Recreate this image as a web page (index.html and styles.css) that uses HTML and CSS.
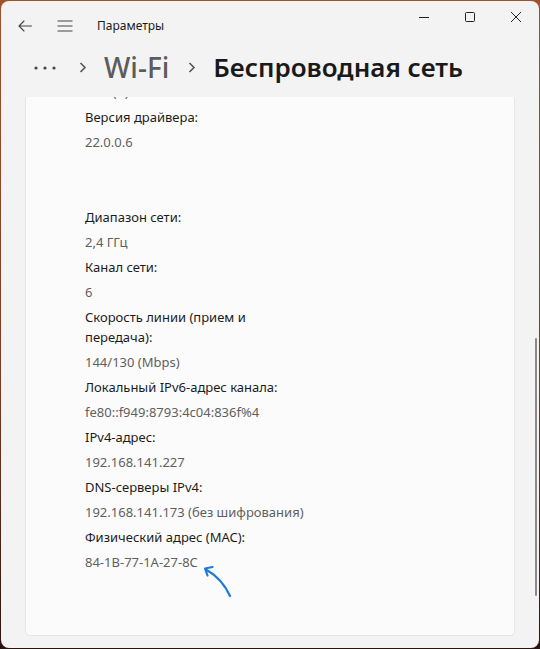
FILE: index.html
```html
<!DOCTYPE html>
<html lang="ru">
<head>
<meta charset="utf-8">
<title>Параметры</title>
<link rel="stylesheet" href="styles.css">
</head>
<body>
<div class="window">
  <div class="titlebar">
    <div class="tb-left">
      <svg class="tb-back" width="14" height="12" viewBox="0 0 14 12"><path d="M6 1 L1 6 L6 11 M1 6 H13.5" fill="none" stroke="#444" stroke-width="1.1" stroke-linecap="round" stroke-linejoin="round"/></svg>
      <svg class="tb-menu" width="16" height="12" viewBox="0 0 16 12"><path d="M0.5 1 H15.5 M0.5 6 H15.5 M0.5 11 H15.5" fill="none" stroke="#444" stroke-width="1.1"/></svg>
      <span class="tb-title">Параметры</span>
    </div>
    <div class="tb-caption">
      <div class="cap-btn"><svg width="12" height="12" viewBox="0 0 12 12"><path d="M1 6.5 H11" stroke="#222" stroke-width="1"/></svg></div>
      <div class="cap-btn"><svg width="12" height="12" viewBox="0 0 12 12"><rect x="1.5" y="1.5" width="9" height="9" rx="1" fill="none" stroke="#222" stroke-width="1"/></svg></div>
      <div class="cap-btn"><svg width="12" height="12" viewBox="0 0 12 12"><path d="M1 1 L11 11 M11 1 L1 11" stroke="#222" stroke-width="1"/></svg></div>
    </div>
  </div>
  <div class="crumbs">
    <svg class="dots" width="22" height="4" viewBox="0 0 22 4"><circle cx="2" cy="2" r="1.6" fill="#444"/><circle cx="11" cy="2" r="1.6" fill="#444"/><circle cx="20" cy="2" r="1.6" fill="#444"/></svg>
    <svg class="chev" width="8" height="11" viewBox="0 0 8 11"><path d="M1.5 1 L6 5.5 L1.5 10" fill="none" stroke="#555" stroke-width="1.6"/></svg>
    <span class="crumb-link">Wi-Fi</span>
    <svg class="chev" width="8" height="11" viewBox="0 0 8 11"><path d="M1.5 1 L6 5.5 L1.5 10" fill="none" stroke="#555" stroke-width="1.6"/></svg>
    <span class="crumb-current">Беспроводная сеть</span>
  </div>
  <div class="scroll">
    <div class="card">
      <div class="props">
        <div class="prop"><div class="label">Описание:</div><div class="value">Intel(R)</div></div>
        <div class="prop"><div class="label">Версия драйвера:</div><div class="value">22.0.0.6</div></div>
        <div class="prop prop-gap"><div class="label">Диапазон сети:</div><div class="value">2,4 ГГц</div></div>
        <div class="prop"><div class="label">Канал сети:</div><div class="value">6</div></div>
        <div class="prop"><div class="label">Скорость линии (прием и передача):</div><div class="value">144/130 (Mbps)</div></div>
        <div class="prop"><div class="label">Локальный IPv6-адрес канала:</div><div class="value">fe80::f949:8793:4c04:836f%4</div></div>
        <div class="prop"><div class="label">IPv4-адрес:</div><div class="value">192.168.141.227</div></div>
        <div class="prop"><div class="label">DNS-серверы IPv4:</div><div class="value nowrap">192.168.141.173 (без шифрования)</div></div>
        <div class="prop mac"><div class="label">Физический адрес (MAC):</div><div class="value">84-1B-77-1A-27-8C</div>
          <svg class="arrow" width="40" height="44" viewBox="0 0 40 44"><path d="M33 38 C29 29 22 19 9 11.5" fill="none" stroke="#1f7ad8" stroke-width="2.2" stroke-linecap="round"/><path d="M15.5 9 L8 10.5 L10.5 17.5" fill="none" stroke="#1f7ad8" stroke-width="2.2" stroke-linecap="round" stroke-linejoin="round"/></svg>
        </div>
      </div>
    </div>
    <div class="scrollbar"></div>
  </div>
</div>
</body>
</html>
```
FILE: styles.css
```css
html, body {
  margin: 0;
  padding: 0;
  height: 100%;
}
body {
  background: linear-gradient(#a0522d, #7a3b22 60%, #2a1410);
  font-family: "Noto Sans", "Open Sans", sans-serif;
  color: #1b1b1b;
  overflow: hidden;
}
.window {
  box-sizing: border-box;
  margin: 1px 1px 0 1px;
  height: 647px;
  background: #f3f3f3;
  border-radius: 8px;
  display: flex;
  flex-direction: column;
  overflow: hidden;
}
.titlebar {
  height: 43px;
  display: flex;
  justify-content: space-between;
  flex: none;
}
.tb-left {
  display: flex;
  align-items: center;
  padding: 6px 0 0 17px;
}
.tb-back { margin-right: 25px; }
.tb-menu { margin-right: 24px; }
.tb-title {
  font-size: 12px;
  color: #1b1b1b;
}
.tb-caption {
  display: flex;
  padding-right: 0;
}
.cap-btn {
  width: 46px;
  height: 32px;
  display: flex;
  align-items: center;
  justify-content: center;
}
.crumbs {
  height: 53px;
  box-sizing: border-box;
  flex: none;
  display: flex;
  align-items: center;
  padding-left: 33px;
  padding-bottom: 8px;
}
.dots {
  margin-right: 23px;
  margin-top: 2px;
}
.chev { margin-right: 17px; margin-top: 2px; }
.crumb-link {
  font-size: 28px;
  font-weight: 500;
  color: #5c5c5c;
  margin-right: 19px;
}
.crumb-current {
  font-size: 26px;
  font-weight: 600;
  color: #1a1a1a;
}
.scroll {
  flex: 1;
  position: relative;
  overflow: hidden;
  padding: 0 24px 0 24px;
}
.card {
  margin-top: -61px;
  background: #fbfbfb;
  border: 1px solid #e5e5e5;
  border-radius: 5px;
  padding: 20px 0 63px 59px;
}
.props {
  display: flex;
  flex-direction: column;
  gap: 5px;
  width: 215px;
}
.prop {
  display: flex;
  flex-direction: column;
  gap: 5px;
  font-size: 13px;
  line-height: 20px;
}
.prop-gap { margin-top: 50px; }
.label { color: #1b1b1b; }
.value { color: #5f5f5f; }
.nowrap { white-space: nowrap; }
.mac { position: relative; }
.arrow {
  position: absolute;
  left: 112px;
  top: 31px;
}
.scrollbar {
  position: absolute;
  right: 2px;
  top: 241px;
  width: 2px;
  height: 258px;
  background: #8a8a8a;
  border-radius: 1px;
}
```
